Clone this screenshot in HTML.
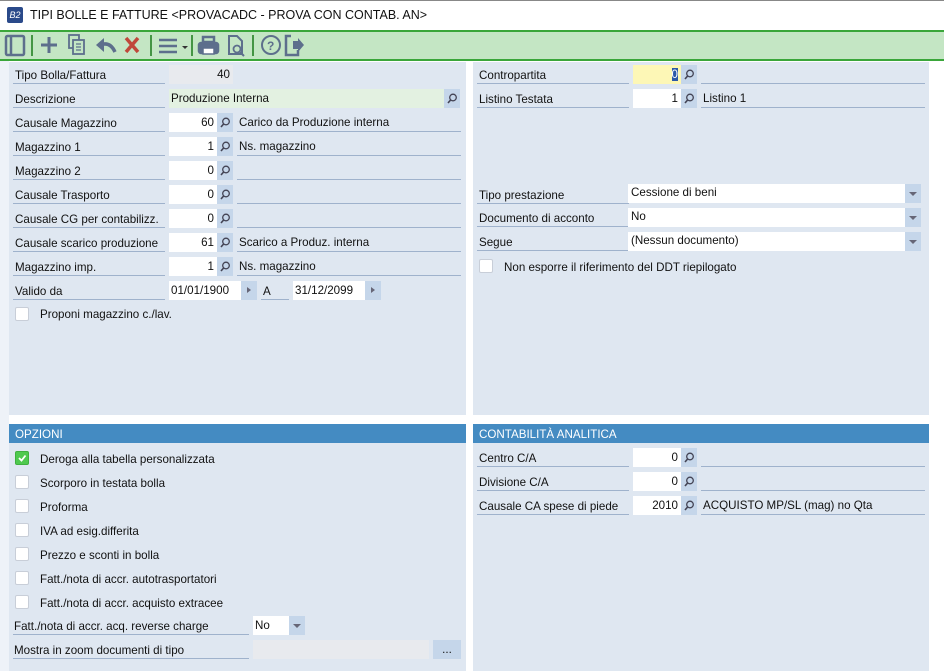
<!DOCTYPE html>
<html><head><meta charset="utf-8"><style>
*{box-sizing:border-box;margin:0;padding:0}
body{width:944px;height:671px;overflow:hidden;background:#fff;font-family:"Liberation Sans",sans-serif;font-size:11.6px;color:#111;position:relative}
.a{position:absolute}
.pan{position:absolute;background:#dfe7f1}
.lbl{position:absolute;border-bottom:1px solid #9fb2cc;height:19px;line-height:22px;padding-left:2px;white-space:nowrap}
.fld{position:absolute;background:#fff;height:19px;line-height:20px;text-align:right;padding-right:3px}
.btn{position:absolute;background:#c5d6ea;width:16px;height:19px}
.btn svg{position:absolute;left:3px;top:4px}
.dsc{position:absolute;border-bottom:1px solid #9fb2cc;height:19px;line-height:20px;padding-left:2px;white-space:nowrap}
.cb{position:absolute;width:14px;height:14px;background:#fff;border:1px solid #c8ced8;border-radius:2px}
.ct{position:absolute;white-space:nowrap;line-height:15px}
.hdr{position:absolute;background:#448bc2;color:#fff;height:19px;line-height:21px;padding-left:6px}
.arr{position:absolute;background:#c5d6ea;width:16px;height:19px}
.arr:after{content:"";position:absolute;left:4px;top:8px;border-left:4px solid transparent;border-right:4px solid transparent;border-top:4px solid #667}
.tri:after{content:"";position:absolute;left:6px;top:6px;border-top:3.5px solid transparent;border-bottom:3.5px solid transparent;border-left:4px solid #667}
</style></head><body>
<div class="a" style="left:0;top:0;width:944px;height:1px;background:#888"></div>
<div class="a" style="left:7px;top:7px;width:16px;height:16px;background:#2a4a8a;border-radius:2px;color:#fff;font-size:9px;line-height:16px;text-align:center;font-style:italic">B2</div>
<div class="a" style="left:30px;top:8px;font-size:12.5px;font-family:'Liberation Sans',sans-serif">TIPI BOLLE E FATTURE &lt;PROVACADC - PROVA CON CONTAB. AN&gt;</div>
<div class="a" style="left:0;top:30px;width:944px;height:31px;background:#c4e6c4;border-top:2px solid #3aa63a;border-bottom:2px solid #3aa63a"></div>
<svg class="a" style="left:0;top:32px" width="320" height="27" viewBox="0 0 320 27">
<g fill="none" stroke="#5d6f8c" stroke-width="2.5">
<rect x="6" y="4" width="18" height="19" rx="1.5"/><line x1="11" y1="4" x2="11" y2="23"/>
<line x1="49" y1="5" x2="49" y2="21" stroke-width="3"/><line x1="41" y1="13" x2="57" y2="13" stroke-width="3"/>
<rect x="69" y="3" width="10" height="13" stroke-width="1.8"/><rect x="73" y="8" width="11" height="14" fill="#c4e6c4" stroke-width="1.8"/>
<path d="M76 12h5M76 15h5M76 18h5" stroke-width="1.3"/>
<path d="M100 13 Q110 9 115 20" stroke-width="3.5"/>
<path d="M159 8h18M159 14h18M159 20h18" stroke-width="2.5"/>
<rect x="199" y="11" width="19" height="10" rx="2" fill="#5d6f8c"/><rect x="203" y="5" width="11" height="5"/><rect x="203" y="16" width="11" height="6" fill="#fff" stroke-width="1.5"/>
<path d="M229 4h8l5 5v13h-13z" stroke-width="2"/><circle cx="237" cy="17" r="3.5" stroke-width="1.8"/><line x1="240" y1="20" x2="244" y2="24" stroke-width="2"/>
<circle cx="271" cy="13" r="9" stroke-width="2"/>
<path d="M291 4h-5v19h12v-5M291 9" stroke-width="2.5"/>
</g>
<path d="M96 13 l8 -7 v14z" fill="#5d6f8c"/>
<path d="M126 6l12 14M138 6l-12 14" stroke="#c0483a" stroke-width="3.5"/>
<path d="M182 14l3 3 3-3z" fill="#333"/>
<text x="267" y="18" font-size="12" font-weight="bold" fill="#5d6f8c" font-family="Liberation Sans">?</text>
<path d="M293 9h5v-3l6 7-6 7v-3h-5z" fill="#5d6f8c"/>
<g stroke="#1a7a1a" stroke-width="1.5"><line x1="32" y1="3" x2="32" y2="24"/><line x1="151" y1="3" x2="151" y2="24"/><line x1="192" y1="3" x2="192" y2="24"/><line x1="253" y1="3" x2="253" y2="24"/></g>
</svg>
<div class="a" style="left:0;top:61px;width:9px;height:610px;background:#eef2f8"></div>
<div class="pan" style="left:9px;top:62px;width:457px;height:353px"></div>
<div class="pan" style="left:473px;top:62px;width:456px;height:353px"></div>
<div class="pan" style="left:9px;top:424px;width:457px;height:247px"></div>
<div class="pan" style="left:473px;top:424px;width:456px;height:247px"></div>
<div class="hdr" style="left:9px;top:424px;width:457px">OPZIONI</div>
<div class="hdr" style="left:473px;top:424px;width:456px">CONTABILITÀ ANALITICA</div>

<svg width="0" height="0" style="position:absolute"><defs><g id="m"><circle cx="6" cy="4.5" r="3.3" fill="none" stroke="#445" stroke-width="1.3"/><line x1="3.6" y1="7" x2="1" y2="10" stroke="#445" stroke-width="1.6"/></g></defs></svg>

<div class="lbl" style="left:13px;top:65px;width:152px">Tipo Bolla/Fattura</div>
<div class="fld" style="left:169px;top:65px;width:64px;background:#e8eaee">40</div>
<div class="lbl" style="left:13px;top:89px;width:152px">Descrizione</div>
<div class="fld" style="left:169px;top:89px;width:275px;background:#e3f1e1;text-align:left;padding-left:2px">Produzione Interna</div>
<div class="btn" style="left:444px;top:89px"><svg width="12" height="12"><use href="#m"/></svg></div>

<div class="lbl" style="left:13px;top:113px;width:152px">Causale Magazzino</div><div class="fld" style="left:169px;top:113px;width:48px">60</div><div class="btn" style="left:217px;top:113px"><svg width="12" height="12"><use href="#m"/></svg></div><div class="dsc" style="left:237px;top:113px;width:224px">Carico da Produzione interna</div>
<div class="lbl" style="left:13px;top:137px;width:152px">Magazzino 1</div><div class="fld" style="left:169px;top:137px;width:48px">1</div><div class="btn" style="left:217px;top:137px"><svg width="12" height="12"><use href="#m"/></svg></div><div class="dsc" style="left:237px;top:137px;width:224px">Ns. magazzino</div>
<div class="lbl" style="left:13px;top:161px;width:152px">Magazzino 2</div><div class="fld" style="left:169px;top:161px;width:48px">0</div><div class="btn" style="left:217px;top:161px"><svg width="12" height="12"><use href="#m"/></svg></div><div class="dsc" style="left:237px;top:161px;width:224px"></div>
<div class="lbl" style="left:13px;top:185px;width:152px">Causale Trasporto</div><div class="fld" style="left:169px;top:185px;width:48px">0</div><div class="btn" style="left:217px;top:185px"><svg width="12" height="12"><use href="#m"/></svg></div><div class="dsc" style="left:237px;top:185px;width:224px"></div>
<div class="lbl" style="left:13px;top:209px;width:152px">Causale CG per contabilizz.</div><div class="fld" style="left:169px;top:209px;width:48px">0</div><div class="btn" style="left:217px;top:209px"><svg width="12" height="12"><use href="#m"/></svg></div><div class="dsc" style="left:237px;top:209px;width:224px"></div>
<div class="lbl" style="left:13px;top:233px;width:152px">Causale scarico produzione</div><div class="fld" style="left:169px;top:233px;width:48px">61</div><div class="btn" style="left:217px;top:233px"><svg width="12" height="12"><use href="#m"/></svg></div><div class="dsc" style="left:237px;top:233px;width:224px">Scarico a Produz. interna</div>
<div class="lbl" style="left:13px;top:257px;width:152px">Magazzino imp.</div><div class="fld" style="left:169px;top:257px;width:48px">1</div><div class="btn" style="left:217px;top:257px"><svg width="12" height="12"><use href="#m"/></svg></div><div class="dsc" style="left:237px;top:257px;width:224px">Ns. magazzino</div>
<div class="lbl" style="left:13px;top:281px;width:152px">Valido da</div>
<div class="fld" style="left:169px;top:281px;width:72px;text-align:left;padding-left:2px">01/01/1900</div><div class="arr tri" style="left:241px;top:281px"></div>
<div class="lbl" style="left:261px;top:281px;width:28px">A</div>
<div class="fld" style="left:293px;top:281px;width:72px;text-align:left;padding-left:2px">31/12/2099</div><div class="arr tri" style="left:365px;top:281px"></div>
<div class="cb" style="left:15px;top:307px"></div><div class="ct" style="left:40px;top:307px">Proponi magazzino c./lav.</div>

<div class="lbl" style="left:477px;top:65px;width:152px">Contropartita</div><div class="fld" style="left:633px;top:65px;width:48px;background:#fdf7b6"><span style="background:#2b58a8;color:#fff">0</span></div><div class="btn" style="left:681px;top:65px"><svg width="12" height="12"><use href="#m"/></svg></div><div class="dsc" style="left:701px;top:65px;width:224px"></div>
<div class="lbl" style="left:477px;top:89px;width:152px">Listino Testata</div><div class="fld" style="left:633px;top:89px;width:48px">1</div><div class="btn" style="left:681px;top:89px"><svg width="12" height="12"><use href="#m"/></svg></div><div class="dsc" style="left:701px;top:89px;width:224px">Listino 1</div>
<div class="lbl" style="left:477px;top:185px;width:152px">Tipo prestazione</div><div class="fld" style="left:628px;top:184px;width:277px;text-align:left;padding-left:3px;line-height:18px">Cessione di beni</div><div class="arr" style="left:905px;top:184px"></div>
<div class="lbl" style="left:477px;top:208px;width:152px">Documento di acconto</div><div class="fld" style="left:628px;top:208px;width:277px;text-align:left;padding-left:3px;line-height:18px">No</div><div class="arr" style="left:905px;top:208px"></div>
<div class="lbl" style="left:477px;top:232px;width:152px">Segue</div><div class="fld" style="left:628px;top:232px;width:277px;text-align:left;padding-left:3px;line-height:18px">(Nessun documento)</div><div class="arr" style="left:905px;top:232px"></div>
<div class="cb" style="left:479px;top:259px"></div><div class="ct" style="left:504px;top:260px">Non esporre il riferimento del DDT riepilogato</div>

<div class="cb" style="left:15px;top:451px;background:#4fc94f;border-color:#3fb03f"><svg width="12" height="12" style="position:absolute;left:0;top:0"><path d="M3 6l2.5 2.5L9.5 3.5" fill="none" stroke="#fff" stroke-width="1.8"/></svg></div><div class="ct" style="left:40px;top:452px">Deroga alla tabella personalizzata</div>
<div class="cb" style="left:15px;top:475px"></div><div class="ct" style="left:40px;top:476px">Scorporo in testata bolla</div>
<div class="cb" style="left:15px;top:499px"></div><div class="ct" style="left:40px;top:500px">Proforma</div>
<div class="cb" style="left:15px;top:523px"></div><div class="ct" style="left:40px;top:524px">IVA ad esig.differita</div>
<div class="cb" style="left:15px;top:547px"></div><div class="ct" style="left:40px;top:548px">Prezzo e sconti in bolla</div>
<div class="cb" style="left:15px;top:571px"></div><div class="ct" style="left:40px;top:572px">Fatt./nota di accr. autotrasportatori</div>
<div class="cb" style="left:15px;top:595px"></div><div class="ct" style="left:40px;top:596px">Fatt./nota di accr. acquisto extracee</div>
<div class="lbl" style="left:13px;top:616px;width:236px;padding-left:1px">Fatt./nota di accr. acq. reverse charge</div>
<div class="fld" style="left:253px;top:616px;width:36px;text-align:left;padding-left:2px">No</div><div class="arr" style="left:289px;top:616px"></div>
<div class="lbl" style="left:13px;top:640px;width:236px;padding-left:1px">Mostra in zoom documenti di tipo</div>
<div class="fld" style="left:253px;top:640px;width:176px;background:#e8eaee"></div>
<div class="btn" style="left:433px;top:640px;width:28px;text-align:center;line-height:19px">...</div>

<div class="lbl" style="left:477px;top:448px;width:152px">Centro C/A</div><div class="fld" style="left:633px;top:448px;width:48px">0</div><div class="btn" style="left:681px;top:448px"><svg width="12" height="12"><use href="#m"/></svg></div><div class="dsc" style="left:701px;top:448px;width:224px"></div>
<div class="lbl" style="left:477px;top:472px;width:152px">Divisione C/A</div><div class="fld" style="left:633px;top:472px;width:48px">0</div><div class="btn" style="left:681px;top:472px"><svg width="12" height="12"><use href="#m"/></svg></div><div class="dsc" style="left:701px;top:472px;width:224px"></div>
<div class="lbl" style="left:477px;top:496px;width:152px">Causale CA spese di piede</div><div class="fld" style="left:633px;top:496px;width:48px">2010</div><div class="btn" style="left:681px;top:496px"><svg width="12" height="12"><use href="#m"/></svg></div><div class="dsc" style="left:701px;top:496px;width:224px">ACQUISTO MP/SL (mag) no Qta</div>
</body></html>
